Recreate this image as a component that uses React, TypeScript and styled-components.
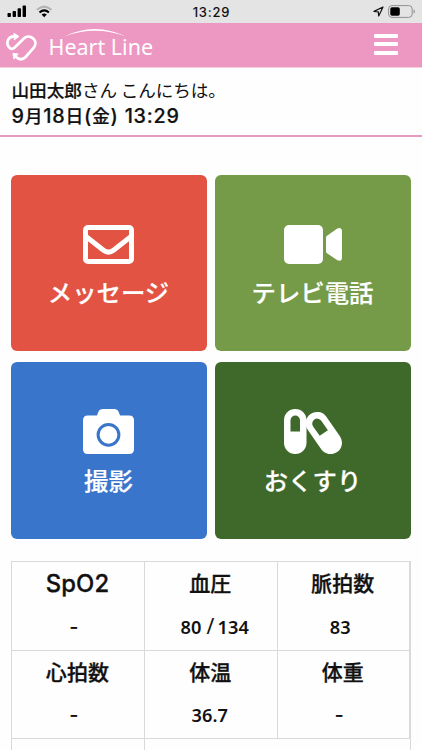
import React from "react";
import styled, { createGlobalStyle } from "styled-components";

const GlobalStyle = createGlobalStyle`
  * { box-sizing: border-box; }
  body {
    margin: 0;
    background: #fefefe;
    color: #111;
    font-family: "Noto Sans CJK JP", sans-serif;
    overflow: hidden;
  }
  svg { display: block; flex: none; }
`;

const Screen = styled.div`
  width: 422px;
  height: 750px;
  overflow: hidden;
`;

const StatusBar = styled.div`
  display: grid;
  grid-template-columns: 1fr auto 1fr;
  align-items: center;
  height: 23px;
  padding: 0 6px 0 7px;
  background: #e4e4e4;
`;

const StatusGroup = styled.div<{ $end?: boolean }>`
  display: flex;
  align-items: center;
  justify-content: ${(p) => (p.$end ? "flex-end" : "flex-start")};
`;

const Clock = styled.time`
  padding-top: 1px;
  font: 500 13px/22px Inter, sans-serif;
  letter-spacing: 0.8px;
`;

const Header = styled.header`
  display: flex;
  align-items: flex-start;
  justify-content: space-between;
  height: 45px;
  padding: 0 24px 0 5px;
  background: #ed98c3;
  border-bottom: 1px solid #f6cce1;
`;

const Brand = styled.div`
  display: flex;
`;

const Wordmark = styled.div`
  position: relative;
  margin-left: 10.5px;
  padding-top: 9px;
  color: #fff;
  font: 400 21.5px/30px "Noto Sans", sans-serif;
  letter-spacing: 0;
  white-space: nowrap;
`;

const Swoosh = styled.svg`
  position: absolute;
  left: 15px;
  top: 5px;
`;

const MenuButton = styled.button`
  display: flex;
  flex-direction: column;
  gap: 4.3px;
  margin: 11px 0 0;
  padding: 0;
  border: 0;
  background: none;
`;

const MenuLine = styled.span`
  width: 24px;
  height: 4px;
  border-radius: 1px;
  background: #fff;
`;

const Greeting = styled.section`
  height: 69px;
  padding: 9px 11.5px 0;
  border-bottom: 2px solid #e59bc2;
  font-size: 17.6px;
  line-height: 26px;
  white-space: nowrap;
`;

const GreetingLine = styled.div`
  height: 25px;
`;

const Name = styled.span`
  font-weight: 500;
  -webkit-text-stroke: 0.2px;
`;

const Hello = styled.span`
  font-weight: 400;
  letter-spacing: -0.1px;
`;

const DateLine = styled.div`
  font-weight: 500;
  font-size: 17.8px;
  letter-spacing: 0.75px;
  -webkit-text-stroke: 0.2px;
`;

const Digits = styled.span`
  font: 500 19.8px/20px Inter, sans-serif;
`;

const Tiles = styled.main`
  display: grid;
  grid-template-columns: 196px 196px;
  grid-auto-rows: 176.5px;
  gap: 11px 8px;
  padding: 37.5px 11px 0;
`;

const Tile = styled.button<{ $color: string; $tall?: boolean }>`
  display: flex;
  flex-direction: column;
  align-items: center;
  justify-content: flex-start;
  gap: ${(p) => (p.$tall ? 8 : 10)}px;
  padding: ${(p) => (p.$tall ? 47 : 50.5)}px 1px 0 0;
  border: 0;
  border-radius: 6px;
  background: ${(p) => p.$color};
  color: #fff;
`;

const TileLabel = styled.span`
  font: 500 24.4px/36px "Noto Sans CJK JP", sans-serif;
  -webkit-text-stroke: 0.2px;
`;

const Vitals = styled.section`
  width: 400px;
  margin: 22.5px 0 0 11px;
  border: solid #d9d9d9;
  border-width: 1px 1px 0 1px;
`;

const VitalsRow = styled.div`
  display: grid;
  grid-template-columns: 133px 132.5px 132.5px;
  grid-auto-rows: 88.7px;
`;

const Cell = styled.div`
  display: flex;
  flex-direction: column;
  align-items: center;
  padding-right: 1px;
  border-right: 1px solid #d9d9d9;
  border-bottom: 1px solid #d9d9d9;
`;

const CellTitle = styled.div<{ $latin?: boolean }>`
  height: 33px;
  margin-top: 4px;
  padding-top: ${(p) => (p.$latin ? 2 : 0)}px;
  font-family: ${(p) => (p.$latin ? "Inter" : '"Noto Sans CJK JP"')}, sans-serif;
  font-size: ${(p) => (p.$latin ? 23.8 : 21)}px;
  font-weight: 500;
  line-height: 32px;
  letter-spacing: 0.1px;
  -webkit-text-stroke: 0.3px;
`;

const CellValue = styled.div<{ $shift: number }>`
  margin: 12.5px 0 0 ${(p) => p.$shift}px;
  font: 600 18.2px/30px "Noto Sans", sans-serif;
  letter-spacing: 0.1px;
  white-space: pre;
`;

const Dash = styled.span`
  font: 500 20px/30px Inter, sans-serif;
`;

const Slash = styled.span`
  font-weight: 400;
  font-size: 21px;
  line-height: 20px;
  margin: 0 3px 0 5px;
`;

const SignalIcon = () => (
  <svg width="19" height="13" viewBox="0 0 19 13" fill="#000">
    <rect x="0.5" y="8" width="3.4" height="4" rx="0.8" />
    <rect x="5.6" y="6" width="3.4" height="6" rx="0.8" />
    <rect x="10.6" y="3.2" width="3.4" height="8.8" rx="0.8" />
    <rect x="15.6" y="0.6" width="3.4" height="11.4" rx="0.8" />
  </svg>
);

const WifiSvg = styled.svg`
  margin-left: 10px;
`;

const WifiIcon = () => (
  <WifiSvg width="17" height="13" viewBox="0 0 17 13" fill="none">
    <path d="M1 4.8Q8.2-1.6 15.4 4.8" stroke="#b3b3b3" strokeWidth="2.1" />
    <path d="M3.5 7.5Q8.2 3.2 12.9 7.5" stroke="#000" strokeWidth="2.1" />
    <path d="M5.6 9.5Q8.2 7.4 10.8 9.5L8.2 12.3Z" fill="#000" />
  </WifiSvg>
);

const LocationIcon = () => (
  <svg width="11" height="11" viewBox="0 0 11 11" fill="none" stroke="#111" strokeWidth="1.2" strokeLinejoin="round">
    <path d="M10 1L1 5.4L5.3 5.8L5.7 10Z" />
  </svg>
);

const BatterySvg = styled.svg`
  margin-left: 4px;
`;

const BatteryIcon = () => (
  <BatterySvg width="28" height="13" viewBox="0 0 28 13">
    <rect x="0.6" y="0.6" width="23.6" height="11.8" rx="3.4" fill="none" stroke="#909090" />
    <rect x="2.3" y="2.2" width="9.5" height="8.6" rx="1.7" />
    <path d="M25.5 4.3Q27 5 27 6.5Q27 8 25.5 8.7Z" fill="#999" />
  </BatterySvg>
);

const LogoIcon = () => (
  <svg width="33" height="45" viewBox="0 0 33 45" fill="none" stroke="#fff" strokeWidth="2.7">
    <path d="M10 13.4C3.6 12.4 0.4 19.6 4 24.2C5.4 26 7.4 26.6 9.4 24.8L18.6 15.8C25 9.8 34.4 18 28.6 24.8L20.6 34C17.4 37.2 13.8 36.8 10.4 33.6" />
    <path d="M8.9 10.2L14 13.4L9.3 16.9ZM7.8 30.4L13.2 30.9L8.9 36.2Z" fill="#fff" strokeWidth="0.8" strokeLinejoin="round" />
  </svg>
);

const MailIcon = () => (
  <svg width="51" height="39" viewBox="0 0 51 39" fill="none" stroke="#fff" strokeWidth="5">
    <rect x="2.5" y="2.5" width="46" height="34" rx="2.5" />
    <path d="M3 11.5L20.5 25.2Q25.5 29 30.5 25.2L48 11.5" />
  </svg>
);

const VideoIcon = () => (
  <svg width="58" height="39" viewBox="0 0 58 39" fill="#fff">
    <rect width="39" height="39" rx="5" />
    <path d="M42 12.5Q42 11.5 43 10.8L53 3.8Q56 2 57.5 4.2Q58 5 58 6V33Q58 34.5 57 35.2Q55.5 36.5 53 35L43 28.2Q42 27.5 42 26.5Z" />
  </svg>
);

const CameraIcon = () => (
  <svg width="51" height="45" viewBox="0 0 51 45">
    <path
      d="M4.8 6.5H14L15.2 3.2Q16.4 0 20 0H31Q34.6 0 35.8 3.2L37 6.5H46.2Q51 6.5 51 11.3V40.2Q51 45 46.2 45H4.8Q0 45 0 40.2V11.3Q0 6.5 4.8 6.5Z"
      fill="#fff"
    />
    <circle cx="25.5" cy="25.8" r="10.4" fill="none" stroke="#3976cb" strokeWidth="3" />
  </svg>
);

const PillsIcon = () => (
  <svg width="58" height="45" viewBox="0 0 58 45">
    <rect x="0" y="0" width="22.5" height="45" rx="11.2" fill="#fff" />
    <path d="M6.5 22.5V11.3a4.75 4.75 0 0 1 9.5 0V22.5Z" fill="#3f692a" />
    <g transform="translate(39.8 24) rotate(-35)">
      <rect x="-11.4" y="-23.2" width="22.8" height="46.4" rx="11.4" fill="#fff" />
      <path d="M-5 0V-11.5a5 5 0 0 1 10 0V0Z" fill="#3f692a" />
    </g>
  </svg>
);

const tiles = [
  { label: "メッセージ", color: "#e25344", icon: <MailIcon />, tall: false },
  { label: "テレビ電話", color: "#759b48", icon: <VideoIcon />, tall: false },
  { label: "撮影", color: "#3976cb", icon: <CameraIcon />, tall: true },
  { label: "おくすり", color: "#3f692a", icon: <PillsIcon />, tall: true },
];

const vitals: { title: string; value: React.ReactNode; shift: number; latin?: boolean }[] = [
  { title: "SpO2", value: <Dash>-</Dash>, shift: -7, latin: true },
  { title: "血圧", value: <>80<Slash>/</Slash>134</>, shift: 9 },
  { title: "脈拍数", value: "83", shift: -5 },
  { title: "心拍数", value: <Dash>-</Dash>, shift: -7 },
  { title: "体温", value: "36.7", shift: -1 },
  { title: "体重", value: <Dash>-</Dash>, shift: -7 },
];

export default function App() {
  return (
    <Screen>
      <GlobalStyle />
      <StatusBar>
        <StatusGroup>
          <SignalIcon />
          <WifiIcon />
        </StatusGroup>
        <Clock>13:29</Clock>
        <StatusGroup $end>
          <LocationIcon />
          <BatteryIcon />
        </StatusGroup>
      </StatusBar>
      <Header>
        <Brand>
          <LogoIcon />
          <Wordmark>
            Heart Line
            <Swoosh width="66" height="10" viewBox="0 0 66 10" fill="#fff">
              <path d="M0 8.5Q31-6.5 62 8.5Q31-3 0 8.5Z" />
            </Swoosh>
          </Wordmark>
        </Brand>
        <MenuButton aria-label="メニュー">
          <MenuLine />
          <MenuLine />
          <MenuLine />
        </MenuButton>
      </Header>
      <Greeting>
        <GreetingLine>
          <Name>山田太郎</Name>
          <Hello>さん こんにちは。</Hello>
        </GreetingLine>
        <DateLine>
          <Digits>9</Digits>月<Digits>18</Digits>日<Digits>(</Digits>金<Digits>) 13:29</Digits>
        </DateLine>
      </Greeting>
      <Tiles>
        {tiles.map((t) => (
          <Tile key={t.label} $color={t.color} $tall={t.tall}>
            {t.icon}
            <TileLabel>{t.label}</TileLabel>
          </Tile>
        ))}
      </Tiles>
      <Vitals>
        <VitalsRow>
          {vitals.map((v) => (
            <Cell key={v.title}>
              <CellTitle $latin={v.latin}>{v.title}</CellTitle>
              <CellValue $shift={v.shift}>{v.value}</CellValue>
            </Cell>
          ))}
          <Cell />
        </VitalsRow>
      </Vitals>
    </Screen>
  );
}
